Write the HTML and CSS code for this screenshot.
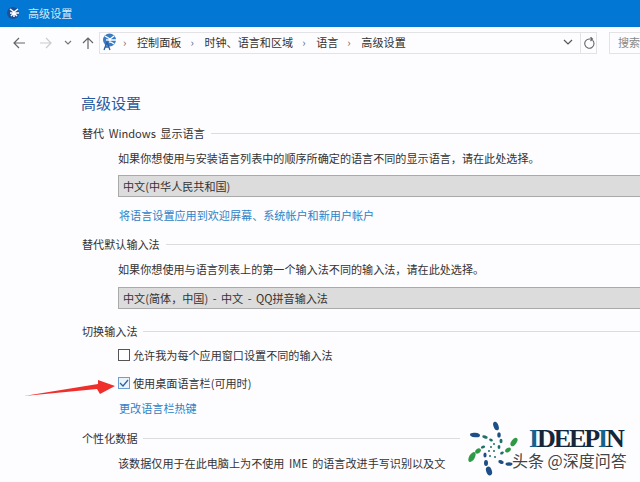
FILE: index.html
```html
<!DOCTYPE html>
<html lang="zh-CN">
<head>
  <meta charset="UTF-8">
  <title>高级设置</title>
  <link rel="stylesheet" href="styles.css">
</head>
<body>
  <div class="titlebar">
    <svg class="title-icon" width="14" height="14" viewBox="0 0 14 14">
      <circle cx="6" cy="7" r="6" fill="#1f4f94"/>
      <path d="M3 3l4 3 4-3M7 6v5M3 7h9M4 10l3-3 3 3" stroke="#fff" stroke-width="1.5" fill="none"/>
    </svg>
    <span>高级设置</span>
  </div>

  <div class="navbar">
    <svg class="nav-btn" width="14" height="14" viewBox="0 0 14 14"><path d="M13 7H2M7 2L2 7l5 5" stroke="#666" stroke-width="1.2" fill="none"/></svg>
    <svg class="nav-btn forward" width="14" height="14" viewBox="0 0 14 14"><path d="M1 7h11M7 2l5 5-5 5" stroke="#ccc" stroke-width="1.2" fill="none"/></svg>
    <svg class="nav-btn small" width="8" height="6" viewBox="0 0 8 6"><path d="M1 1l3 3 3-3" stroke="#777" stroke-width="1.2" fill="none"/></svg>
    <svg class="nav-btn up" width="14" height="14" viewBox="0 0 14 14"><path d="M7 13V2M2 7l5-5 5 5" stroke="#666" stroke-width="1.2" fill="none"/></svg>
    <div class="address">
      <svg class="addr-icon" width="17" height="18" viewBox="0 0 17 18">
        <circle cx="8.500" cy="7" r="6.500" fill="#3a7cc4"/>
        <path d="M4 3l5 3 4-3M9 6v4M5 7h11M10 9l3 2" stroke="#fff" stroke-width="1.300" fill="none"/>
        <path d="M3 17l3-8 3 8M4 14h4" stroke="#2a5fa8" stroke-width="1.300" fill="none"/>
      </svg>
      <span class="crumb-sep">›</span><span>控制面板</span>
      <span class="crumb-sep">›</span><span>时钟、语言和区域</span>
      <span class="crumb-sep">›</span><span>语言</span>
      <span class="crumb-sep">›</span><span>高级设置</span>
      <svg class="addr-down" width="10" height="7" viewBox="0 0 10 7"><path d="M1 1l4 4 4-4" stroke="#555" stroke-width="1.2" fill="none"/></svg>
    </div>
    <div class="refresh">
      <svg width="12" height="13" viewBox="0 0 12 13"><path d="M9.500 3.200A4.600 4.600 0 1 1 6 2H9M7.500 0L9.500 2 7.500 4" stroke="#666" stroke-width="1.100" fill="none"/></svg>
    </div>
    <div class="search">搜索</div>
  </div>

  <main class="content">
    <h1>高级设置</h1>

    <section class="group">
      <div class="group-head"><span>替代 Windows 显示语言</span><i></i></div>
      <div class="group-body">
        <p>如果你想使用与安装语言列表中的顺序所确定的语言不同的显示语言，请在此处选择。</p>
        <div class="select">中文(中华人民共和国)</div>
        <a class="link">将语言设置应用到欢迎屏幕、系统帐户和新用户帐户</a>
      </div>
    </section>

    <section class="group">
      <div class="group-head"><span>替代默认输入法</span><i></i></div>
      <div class="group-body">
        <p>如果你想使用与语言列表上的第一个输入法不同的输入法，请在此处选择。</p>
        <div class="select">中文(简体，中国) - 中文 - QQ拼音输入法</div>
      </div>
    </section>

    <section class="group">
      <div class="group-head"><span>切换输入法</span><i></i></div>
      <div class="group-body">
        <label class="check"><b class="box"></b>允许我为每个应用窗口设置不同的输入法</label>
        <label class="check"><b class="box on"><svg width="10" height="8" viewBox="0 0 10 8"><path d="M1 4l3 3 5-6" stroke="#2a5f9e" stroke-width="1.200" fill="none"/></svg></b>使用桌面语言栏(可用时)</label>
        <a class="link">更改语言栏热键</a>
      </div>
    </section>

    <section class="group">
      <div class="group-head"><span>个性化数据</span><i></i></div>
      <div class="group-body">
        <p>该数据仅用于在此电脑上为不使用 IME 的语言改进手写识别以及文</p>
      </div>
    </section>
  </main>

  <!-- red arrow and watermark sit on top of the screenshot -->
  <svg class="arrow" width="92" height="24" viewBox="0 0 92 24">
    <path d="M0 20L74 8 74 4 91 10 76 18 73 13Z" fill="#ee2f2c"/>
  </svg>

  <div class="watermark">
    <svg class="wm-logo" width="75" height="62" viewBox="0 0 75 62">
      <g fill="#1d4f86">
        <ellipse cx="36" cy="8" rx="2.500" ry="4.500" transform="rotate(-20 36 8)"/>
        <ellipse cx="15" cy="17" rx="5" ry="2.300" transform="rotate(5 15 17)"/>
        <ellipse cx="29" cy="53" rx="2.800" ry="4.500" transform="rotate(-20 29 53)"/>
        <ellipse cx="26" cy="45" rx="2" ry="3"/>
        <ellipse cx="25" cy="37" rx="1.600" ry="2.600"/>
        <ellipse cx="39" cy="17" rx="1.800" ry="2.800"/>
        <ellipse cx="41" cy="44" rx="2.800" ry="1.800" transform="rotate(20 41 44)"/>
        <ellipse cx="49" cy="46" rx="3.500" ry="1.800"/>
      </g>
      <g fill="#2f9a45">
        <ellipse cx="54" cy="24" rx="2.600" ry="4.800" transform="rotate(35 54 24)"/>
        <ellipse cx="12" cy="39" rx="2.800" ry="5.500" transform="rotate(30 12 39)"/>
        <ellipse cx="18" cy="33" rx="2.200" ry="3.200" transform="rotate(50 18 33)"/>
        <ellipse cx="48" cy="32" rx="2" ry="3.200" transform="rotate(55 48 32)"/>
      </g>
      <g fill="#1f6f6a">
        <ellipse cx="25" cy="19" rx="2.800" ry="1.500" transform="rotate(15 25 19)"/>
        <ellipse cx="31" cy="22" rx="2" ry="1.300" transform="rotate(25 31 22)"/>
        <ellipse cx="41" cy="23" rx="1.500" ry="2.300"/>
        <ellipse cx="39" cy="29" rx="1.400" ry="2"/>
        <ellipse cx="23" cy="29" rx="2.200" ry="1.400" transform="rotate(-20 23 29)"/>
        <ellipse cx="42" cy="35" rx="2" ry="1.300" transform="rotate(-30 42 35)"/>
        <circle cx="31" cy="29" r="1"/><circle cx="34" cy="33" r="1"/>
        <circle cx="29" cy="33" r="1"/><circle cx="34" cy="26" r="1"/>
        <circle cx="35" cy="39" r="1"/><circle cx="30" cy="38" r="1"/>
      </g>
    </svg>
    <div class="wm-brand"><em>I</em>DEEP<em>I</em>N</div>
    <div class="wm-caption">头条 @深度问答</div>
  </div>
</body>
</html>
```

FILE: styles.css
```css
* {
  margin: 0;
  padding: 0;
  box-sizing: border-box;
}

body {
  width: 640px;
  height: 482px;
  overflow: hidden;
  position: relative;
  background: #fdfcfe;
  color: #333;
  font-family: "Noto Sans CJK SC", "Liberation Sans", sans-serif;
  font-size: 11.1px;
  word-spacing: 2px;
}

.titlebar {
  height: 27px;
  background: #0277d3;
  color: #d5e8f7;
  display: flex;
  align-items: center;
  padding: 0 0 1px 7px;
  gap: 7px;
}

.navbar {
  height: 22px;
  margin-top: 5px;
  display: flex;
  align-items: center;
}

.nav-btn {
  flex: none;
  margin-left: 12px;
}

.nav-btn.forward {
  margin-left: 13px;
}

.nav-btn.small {
  margin-left: 11px;
}

.nav-btn.up {
  margin-left: 9px;
}

.address {
  margin-left: 4px;
  width: 481px;
  flex: none;
  height: 22px;
  border: 1px solid #e3e3e6;
  border-right: none;
  display: flex;
  align-items: center;
  padding: 0 0 2px 1px;
  white-space: nowrap;
}

.addr-icon {
  flex: none;
  margin: 0 -4px 0 0;
}

.crumb-sep {
  width: 4px;
  margin: 0 10px 0 9px;
  color: #666;
}

.addr-down {
  margin-left: auto;
  margin-right: 7px;
}

.refresh {
  width: 17px;
  height: 22px;
  flex: none;
  border: 1px solid #e3e3e6;
  display: flex;
  align-items: center;
  justify-content: center;
}

.search {
  width: 31px;
  height: 22px;
  flex: none;
  margin-left: 12px;
  border: 1px solid #e3e3e6;
  border-right: none;
  padding-left: 8px;
  font-size: 11px;
  line-height: 18px;
  color: #888;
  white-space: nowrap;
  overflow: hidden;
}

.content {
  padding: 39px 0 0 82px;
}

h1 {
  font-size: 15px;
  font-weight: 400;
  line-height: 20px;
  color: #2a5a9e;
  margin: 0 0 10px -1px;
}

.group {
  margin-bottom: 10px;
}

.group-head {
  display: flex;
  align-items: center;
  gap: 6px;
  height: 20px;
}

.group-head i {
  flex: 1;
  height: 1px;
  background: #dcdcde;
}

.group-body {
  padding-left: 36px;
}

.group-body p {
  line-height: 18px;
  margin-top: 6px;
  white-space: nowrap;
}

.select {
  margin-top: 8px;
  height: 22px;
  background: #dcdcdc;
  border: 1px solid #aaa;
  border-right: none;
  padding-left: 4px;
  line-height: 20px;
}

.select:last-child {
  margin-top: 9px;
  margin-bottom: 12px;
}

.link {
  display: block;
  margin: 9px 0 0 1px;
  line-height: 18px;
  color: #2f82c6;
}

.check {
  display: flex;
  align-items: center;
  height: 18px;
  margin-top: 5px;
  gap: 3px;
}

.check + .check {
  margin-top: 10px;
}

.check + .link {
  margin-top: 7px;
  margin-bottom: 11px;
}

.box {
  width: 12px;
  height: 12px;
  flex: none;
  border: 1px solid #555;
  background: #fff;
  display: flex;
  align-items: center;
  justify-content: center;
}

.box.on {
  border-color: #6a9fd0;
  background: #eaf2fa;
}

.arrow {
  position: absolute;
  left: 24px;
  top: 376px;
}

.watermark {
  position: absolute;
  left: 460px;
  top: 418px;
  width: 180px;
  height: 64px;
  background: #fdfcfe;
  word-spacing: 0;
}

.wm-logo {
  position: absolute;
  left: 0;
  top: 0;
}

.wm-brand {
  position: absolute;
  left: 69px;
  top: 11px;
  font-family: "Liberation Serif", serif;
  font-size: 26px;
  font-weight: 700;
  letter-spacing: -2.1px;
  line-height: 20px;
  color: #15263a;
  white-space: nowrap;
}

.wm-brand em {
  font-style: normal;
  color: #14628f;
}

.wm-caption {
  position: absolute;
  left: 52px;
  top: 33px;
  font-size: 16px;
  line-height: 18px;
  color: #444;
  white-space: nowrap;
  text-shadow: 1px 0 0 #fff, -1px 0 0 #fff, 0 1px 0 #fff, 0 -1px 0 #fff;
}
```
